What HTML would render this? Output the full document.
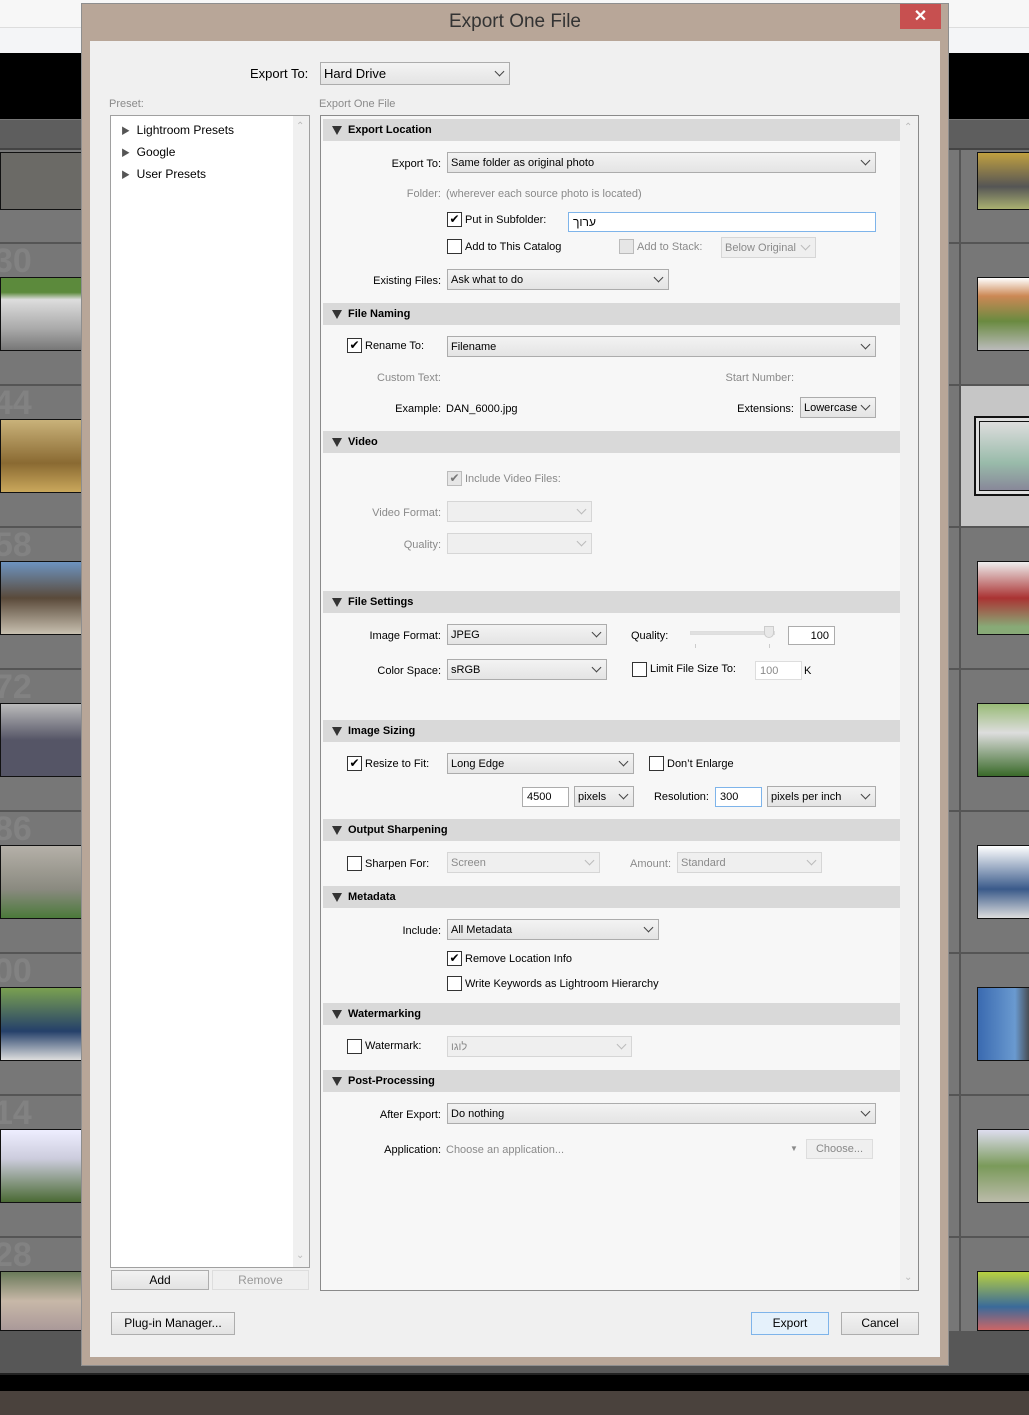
<!DOCTYPE html>
<html><head><meta charset="utf-8"><style>
*{margin:0;padding:0;box-sizing:border-box}
body{width:1029px;height:1415px;position:relative;overflow:hidden;background:#777;font-family:"Liberation Sans","Noto Sans CJK JP",sans-serif;font-size:11px;color:#000}
div,span{position:absolute}
.t{white-space:nowrap;line-height:16px;font-size:11px}
.g{color:#8a8a8a}
.dd{border:1px solid #acacac;background:linear-gradient(#f3f3f3,#e4e4e4);height:21px}
.dd span{left:3px;top:3px;white-space:nowrap;line-height:15px}
.dd i{position:absolute;right:6px;top:4px;width:7px;height:7px;border-right:1.5px solid #444;border-bottom:1.5px solid #444;transform:rotate(45deg)}
.dd.dis{background:#efefef;border-color:#d6d6d6;color:#8a8a8a}
.dd.dis i{border-color:#bbb}
.cb{width:15px;height:15px;border:1px solid #333;background:#fff;font-size:12px;line-height:13px;text-align:center}
.cb.dis{border-color:#bbb;background:#e6e6e6;color:#777}
.hd{left:323px;width:577px;height:22px;background:#d9d9d9;font-weight:bold;font-size:11px;line-height:23px;padding-left:25px}
.hd:before{content:"";position:absolute;left:9px;top:7px;border-left:5px solid transparent;border-right:5px solid transparent;border-top:9px solid #333}
.in{background:#fff;border:1px solid #acacac;height:20px}
.in span{left:4px;top:2px;line-height:15px}
.btn{border:1px solid #adadad;background:linear-gradient(#f2f2f2,#e3e3e3);text-align:center;font-size:12px}
.ph{border:1px solid #111}
.hl{height:2px;background:#555}
.num{font-size:34px;font-weight:bold;color:#828282;line-height:34px}
</style></head><body>
<div style="left:0;top:0;width:1029px;height:27px;background:#f7f7f7"></div>
<div style="left:0;top:27px;width:1029px;height:26px;background:#f4f5f7;border-top:1px solid #ddd"></div>
<div style="left:0;top:53px;width:1029px;height:66px;background:#000"></div>
<div style="left:0;top:120px;width:1029px;height:28px;background:#5e5e5e"></div>
<div style="left:0;top:148px;width:1029px;height:2px;background:#444"></div>
<div class="hl" style="left:0;top:242px;width:81px"></div>
<div class="hl" style="left:0;top:384px;width:81px"></div>
<div class="hl" style="left:0;top:526px;width:81px"></div>
<div class="hl" style="left:0;top:668px;width:81px"></div>
<div class="hl" style="left:0;top:810px;width:81px"></div>
<div class="hl" style="left:0;top:952px;width:81px"></div>
<div class="hl" style="left:0;top:1094px;width:81px"></div>
<div class="hl" style="left:0;top:1236px;width:81px"></div>
<div class="num" style="left:-6px;top:244px">30</div>
<div class="num" style="left:-6px;top:386px">44</div>
<div class="num" style="left:-6px;top:528px">58</div>
<div class="num" style="left:-6px;top:670px">72</div>
<div class="num" style="left:-6px;top:812px">86</div>
<div class="num" style="left:-6px;top:954px">00</div>
<div class="num" style="left:-6px;top:1096px">14</div>
<div class="num" style="left:-6px;top:1238px">28</div>
<div class="ph" style="left:0;top:152px;width:82px;height:58px;background:#6b6a66"></div>
<div class="ph" style="left:0;top:277px;width:82px;height:74px;background:linear-gradient(#5c8a3c 0,#5c8a3c 20%,#ddd 30%,#aaa 70%,#777 100%)"></div>
<div class="ph" style="left:0;top:419px;width:82px;height:74px;background:linear-gradient(#c9b27a,#8a6a32 60%,#caa85c)"></div>
<div class="ph" style="left:0;top:561px;width:82px;height:74px;background:linear-gradient(#6d93c0,#5a4a3a 50%,#c8c0b0)"></div>
<div class="ph" style="left:0;top:703px;width:82px;height:74px;background:linear-gradient(#bbb,#556 50%,#556)"></div>
<div class="ph" style="left:0;top:845px;width:82px;height:74px;background:linear-gradient(#b5b0a8,#8a8a80 60%,#4b7a3a)"></div>
<div class="ph" style="left:0;top:987px;width:82px;height:74px;background:linear-gradient(#7aa050,#25406a 60%,#ddd)"></div>
<div class="ph" style="left:0;top:1129px;width:82px;height:74px;background:linear-gradient(#eef,#ccd 40%,#4a6a34)"></div>
<div class="ph" style="left:0;top:1271px;width:82px;height:60px;background:linear-gradient(#6a7a5a,#c8b8a8 50%,#a99)"></div>
<div style="left:959px;top:150px;width:2px;height:1215px;background:#555"></div>
<div class="hl" style="left:949px;top:242px;width:80px"></div>
<div class="hl" style="left:949px;top:384px;width:80px"></div>
<div style="left:961px;top:386px;width:68px;height:140px;background:#c6c6c6"></div>
<div class="hl" style="left:949px;top:526px;width:80px"></div>
<div class="hl" style="left:949px;top:668px;width:80px"></div>
<div class="hl" style="left:949px;top:810px;width:80px"></div>
<div class="hl" style="left:949px;top:952px;width:80px"></div>
<div class="hl" style="left:949px;top:1094px;width:80px"></div>
<div class="hl" style="left:949px;top:1236px;width:80px"></div>
<div class="ph" style="left:977px;top:152px;width:55px;height:58px;background:linear-gradient(#c0a040,#555 60%,#aab070)"></div>
<div class="ph" style="left:977px;top:277px;width:55px;height:74px;background:linear-gradient(#fff 0,#c85 25%,#6a8a40 60%,#bbb)"></div>
<div style="left:974px;top:416px;width:58px;height:80px;border:2px solid #111;background:#ddd"></div>
<div class="ph" style="left:979px;top:421px;width:52px;height:70px;background:linear-gradient(#ddd,#9ba 60%,#889)"></div>
<div class="ph" style="left:977px;top:561px;width:55px;height:74px;background:linear-gradient(#eee,#a33 50%,#8a7 90%)"></div>
<div class="ph" style="left:977px;top:703px;width:55px;height:74px;background:linear-gradient(#9b7,#ddd 40%,#3a6a2a)"></div>
<div class="ph" style="left:977px;top:845px;width:55px;height:74px;background:linear-gradient(#fff,#3a5a8a 60%,#ddd)"></div>
<div class="ph" style="left:977px;top:987px;width:55px;height:74px;background:linear-gradient(90deg,#3a6ab0,#6a9ad0 70%,#444)"></div>
<div class="ph" style="left:977px;top:1129px;width:55px;height:74px;background:linear-gradient(#dde,#7a9a5a 50%,#bba)"></div>
<div class="ph" style="left:977px;top:1271px;width:55px;height:60px;background:linear-gradient(#b8d040,#3a6a9a 60%,#c66)"></div>
<div style="left:0;top:1331px;width:1029px;height:42px;background:#575757"></div>
<div style="left:0;top:1373px;width:1029px;height:2px;background:#222"></div>
<div style="left:0;top:1375px;width:1029px;height:16px;background:#000"></div>
<div style="left:0;top:1391px;width:1029px;height:24px;background:#4a423d"></div>
<div style="left:81px;top:3px;width:868px;height:1363px;background:#b8a698;border:1px solid #8e8e8e"></div>
<div class="t" style="left:81px;top:11px;width:868px;text-align:center;font-size:19px;line-height:22px;color:#333">Export One File</div>
<div style="left:900px;top:4px;width:41px;height:25px;background:#c75050;color:#fff;font-size:16px;font-weight:bold;text-align:center;line-height:25px">✕</div>
<div style="left:90px;top:41px;width:850px;height:1316px;background:#f0f0f0"></div>
<div class="t" style="left:250px;top:66px;font-size:13px;line-height:16px">Export To:</div>
<div class="dd" style="left:320px;top:62px;width:190px;height:23px"><span style="font-size:13px;top:3px">Hard Drive</span><i style="top:5px"></i></div>
<div class="t g" style="left:109px;top:96px">Preset:</div>
<div class="t g" style="left:319px;top:96px">Export One File</div>
<div style="left:110px;top:115px;width:200px;height:1153px;background:#fff;border:1px solid #a0a0a0"></div>
<div style="left:293px;top:116px;width:16px;height:1151px;background:#f0f0f0"></div>
<div class="t" style="left:296px;top:119px;color:#bbb;font-size:10px">⌃</div>
<div class="t" style="left:296px;top:1248px;color:#bbb;font-size:10px">⌄</div>
<div class="t" style="left:121px;top:122px;font-size:12px;line-height:16px"><span style="position:static;color:#555;font-size:9px">▶</span>&nbsp; Lightroom Presets</div>
<div class="t" style="left:121px;top:144px;font-size:12px;line-height:16px"><span style="position:static;color:#555;font-size:9px">▶</span>&nbsp; Google</div>
<div class="t" style="left:121px;top:166px;font-size:12px;line-height:16px"><span style="position:static;color:#555;font-size:9px">▶</span>&nbsp; User Presets</div>
<div class="btn" style="left:111px;top:1270px;width:98px;height:20px;line-height:18px">Add</div>
<div class="btn" style="left:212px;top:1270px;width:97px;height:20px;line-height:18px;color:#999;background:#efefef;border-color:#ddd">Remove</div>
<div class="btn" style="left:111px;top:1312px;width:124px;height:23px;line-height:21px">Plug-in Manager...</div>
<div class="btn" style="left:751px;top:1312px;width:78px;height:23px;line-height:21px;background:#e5f1fb;border-color:#7eb4ea">Export</div>
<div class="btn" style="left:841px;top:1312px;width:78px;height:23px;line-height:21px">Cancel</div>
<div style="left:320px;top:115px;width:599px;height:1176px;background:#f7f7f7;border:1px solid #8a8a8a"></div>
<div style="left:900px;top:116px;width:18px;height:1174px;background:#f0f0f0"></div>
<div class="t" style="left:904px;top:120px;color:#bbb;font-size:10px">⌃</div>
<div class="t" style="left:904px;top:1270px;color:#bbb;font-size:10px">⌄</div>

<div class="hd" style="top:119px">Export Location</div>
<div class="t" style="right:588px;top:156px">Export To:</div>
<div class="dd" style="left:447px;top:152px;width:429px"><span>Same folder as original photo</span><i></i></div>
<div class="t g" style="right:588px;top:186px">Folder:</div>
<div class="t g" style="left:446px;top:186px">(wherever each source photo is located)</div>
<div class="cb" style="left:447px;top:212px">✔</div>
<div class="t" style="left:465px;top:212px">Put in Subfolder:</div>
<div class="in" style="left:568px;top:212px;width:308px;border-color:#7eb4ea"><span style="font-size:12px">ערוך</span></div>
<div class="cb" style="left:447px;top:239px"></div>
<div class="t" style="left:465px;top:239px">Add to This Catalog</div>
<div class="cb dis" style="left:619px;top:239px"></div>
<div class="t g" style="left:637px;top:239px">Add to Stack:</div>
<div class="dd dis" style="left:721px;top:237px;width:95px"><span>Below Original</span><i></i></div>
<div class="t" style="right:588px;top:273px">Existing Files:</div>
<div class="dd" style="left:447px;top:269px;width:222px"><span>Ask what to do</span><i></i></div>

<div class="hd" style="top:303px">File Naming</div>
<div class="cb" style="left:347px;top:338px">✔</div>
<div class="t" style="left:365px;top:338px">Rename To:</div>
<div class="dd" style="left:447px;top:336px;width:429px"><span>Filename</span><i></i></div>
<div class="t g" style="right:588px;top:370px">Custom Text:</div>
<div class="t g" style="right:235px;top:370px">Start Number:</div>
<div class="t" style="right:588px;top:401px">Example:</div>
<div class="t" style="left:446px;top:401px">DAN_6000.jpg</div>
<div class="t" style="right:235px;top:401px">Extensions:</div>
<div class="dd" style="left:800px;top:397px;width:76px"><span>Lowercase</span><i></i></div>

<div class="hd" style="top:431px">Video</div>
<div class="cb dis" style="left:447px;top:471px;background:#e6e6e6">✔</div>
<div class="t g" style="left:465px;top:471px">Include Video Files:</div>
<div class="t g" style="right:588px;top:505px">Video Format:</div>
<div class="dd dis" style="left:447px;top:501px;width:145px"><i></i></div>
<div class="t g" style="right:588px;top:537px">Quality:</div>
<div class="dd dis" style="left:447px;top:533px;width:145px"><i></i></div>

<div class="hd" style="top:591px">File Settings</div>
<div class="t" style="right:588px;top:628px">Image Format:</div>
<div class="dd" style="left:447px;top:624px;width:160px"><span>JPEG</span><i></i></div>
<div class="t" style="left:631px;top:628px">Quality:</div>
<div style="left:690px;top:631px;width:85px;height:4px;background:#e0e0e0;border:1px solid #ddd"></div>
<div style="left:764px;top:626px;width:10px;height:12px;background:#e8e8e8;border:1px solid #ccc;border-radius:0 0 5px 5px"></div>
<div style="left:695px;top:644px;width:1px;height:4px;background:#ccc"></div>
<div style="left:769px;top:644px;width:1px;height:4px;background:#ccc"></div>
<div class="in" style="left:788px;top:626px;width:47px;height:19px"><span style="left:auto;right:5px">100</span></div>
<div class="t" style="right:588px;top:663px">Color Space:</div>
<div class="dd" style="left:447px;top:659px;width:160px"><span>sRGB</span><i></i></div>
<div class="cb" style="left:632px;top:662px"></div>
<div class="t" style="left:650px;top:661px">Limit File Size To:</div>
<div class="in" style="left:755px;top:661px;width:47px;height:19px;border-color:#ddd"><span class="g">100</span></div>
<div class="t" style="left:804px;top:663px">K</div>

<div class="hd" style="top:720px">Image Sizing</div>
<div class="cb" style="left:347px;top:756px">✔</div>
<div class="t" style="left:365px;top:756px">Resize to Fit:</div>
<div class="dd" style="left:447px;top:753px;width:187px"><span>Long Edge</span><i></i></div>
<div class="cb" style="left:649px;top:756px"></div>
<div class="t" style="left:667px;top:756px">Don’t Enlarge</div>
<div class="in" style="left:522px;top:787px;width:47px"><span>4500</span></div>
<div class="dd" style="left:574px;top:786px;width:60px"><span>pixels</span><i></i></div>
<div class="t" style="right:320px;top:789px">Resolution:</div>
<div class="in" style="left:715px;top:787px;width:47px;border-color:#7eb4ea"><span>300</span></div>
<div class="dd" style="left:767px;top:786px;width:109px"><span>pixels per inch</span><i></i></div>

<div class="hd" style="top:819px">Output Sharpening</div>
<div class="cb" style="left:347px;top:856px"></div>
<div class="t" style="left:365px;top:856px">Sharpen For:</div>
<div class="dd dis" style="left:447px;top:852px;width:153px"><span>Screen</span><i></i></div>
<div class="t g" style="right:358px;top:856px">Amount:</div>
<div class="dd dis" style="left:677px;top:852px;width:145px"><span>Standard</span><i></i></div>

<div class="hd" style="top:886px">Metadata</div>
<div class="t" style="right:588px;top:923px">Include:</div>
<div class="dd" style="left:447px;top:919px;width:212px"><span>All Metadata</span><i></i></div>
<div class="cb" style="left:447px;top:951px">✔</div>
<div class="t" style="left:465px;top:951px">Remove Location Info</div>
<div class="cb" style="left:447px;top:976px"></div>
<div class="t" style="left:465px;top:976px">Write Keywords as Lightroom Hierarchy</div>

<div class="hd" style="top:1003px">Watermarking</div>
<div class="cb" style="left:347px;top:1039px"></div>
<div class="t" style="left:365px;top:1038px">Watermark:</div>
<div class="dd dis" style="left:447px;top:1036px;width:185px"><span>לוגו</span><i></i></div>

<div class="hd" style="top:1070px">Post-Processing</div>
<div class="t" style="right:588px;top:1107px">After Export:</div>
<div class="dd" style="left:447px;top:1103px;width:429px"><span>Do nothing</span><i></i></div>
<div class="t" style="right:588px;top:1142px">Application:</div>
<div class="t g" style="left:446px;top:1142px">Choose an application...</div>
<div class="t g" style="left:790px;top:1141px;font-size:8px">▼</div>
<div class="btn" style="left:806px;top:1139px;width:67px;height:20px;line-height:18px;font-size:11px;color:#888;background:#efefef;border-color:#ddd">Choose...</div>
</body></html>
